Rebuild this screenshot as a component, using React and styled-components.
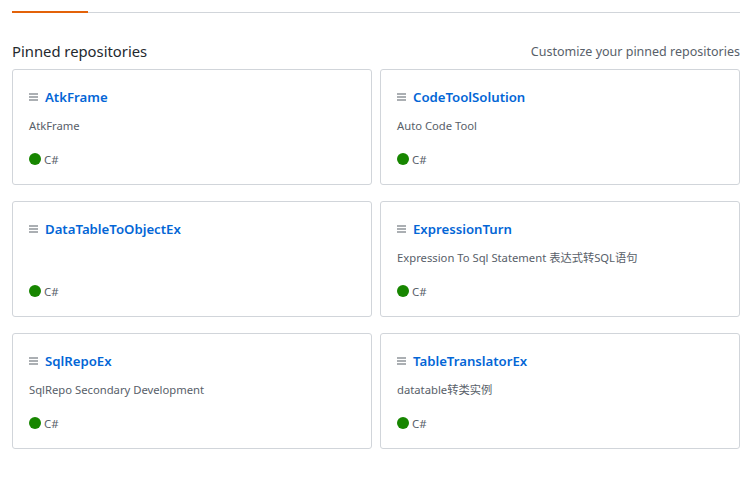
import React from "react";
import styled, { createGlobalStyle } from "styled-components";

const Global = createGlobalStyle`
  html, body { margin: 0; padding: 0; background: #fff; }
  body { font-family: "Noto Sans", "Noto Sans CJK SC", sans-serif; color: #24292e; }
`;

const Page = styled.div`
  padding: 0 8px 0 12px;
`;

const TabBar = styled.div`
  display: flex;
  height: 12px;
  border-bottom: 1px solid #d1d5da;
`;

const ActiveTab = styled.div`
  width: 76px;
  height: 13px;
  margin-bottom: -1px;
  border-bottom: 2px solid #e36209;
  box-sizing: border-box;
`;

const Header = styled.div`
  display: flex;
  justify-content: space-between;
  align-items: center;
  margin-top: 26px;
  height: 24px;
  margin-bottom: 6px;
`;

const Title = styled.h2`
  margin: 0;
  font-size: 14.8px;
  font-weight: 400;
  color: #24292e;
`;

const Customize = styled.a`
  font-size: 12.5px;
  color: #586069;
  text-decoration: none;
`;

const Grid = styled.div`
  display: grid;
  grid-template-columns: 1fr 1fr;
  column-gap: 8px;
  row-gap: 16px;
`;

const Card = styled.div`
  box-sizing: border-box;
  height: 116px;
  border: 1px solid #d1d5da;
  border-radius: 3px;
  padding: 15px 16px 0 16px;
  display: flex;
  flex-direction: column;
`;

const NameRow = styled.div`
  display: flex;
  align-items: center;
  height: 24px;
`;

const RepoLink = styled.a`
  font-size: 13.2px;
  font-weight: 600;
  color: #0366d6;
  text-decoration: none;
  margin-left: 7px;
`;

const Desc = styled.p`
  margin: 8px 0 0;
  height: 18px;
  line-height: 18px;
  font-size: 11.25px;
  color: #586069;
`;

const Meta = styled.div`
  margin-top: 16px;
  display: flex;
  align-items: center;
  height: 16px;
  font-size: 11.5px;
  color: #586069;
`;

const Dot = styled.span`
  width: 12px;
  height: 12px;
  border-radius: 50%;
  background: ${(p) => p.color};
  margin-right: 3px;
`;

const ListIcon = () => (
  <svg width="9" height="8" viewBox="0 0 9 8" fill="#586069">
    <rect x="0" y="0.5" width="9" height="1" />
    <rect x="0" y="3.5" width="9" height="1" />
    <rect x="0" y="6.5" width="9" height="1" />
  </svg>
);

const repos = [
  { name: "AtkFrame", desc: "AtkFrame" },
  { name: "CodeToolSolution", desc: "Auto Code Tool" },
  { name: "DataTableToObjectEx", desc: "" },
  { name: "ExpressionTurn", desc: "Expression To Sql Statement 表达式转SQL语句" },
  { name: "SqlRepoEx", desc: "SqlRepo Secondary Development" },
  { name: "TableTranslatorEx", desc: "datatable转类实例" },
];

export default function App() {
  return (
    <Page>
      <Global />
      <TabBar>
        <ActiveTab />
      </TabBar>
      <Header>
        <Title>Pinned repositories</Title>
        <Customize href="#">Customize your pinned repositories</Customize>
      </Header>
      <Grid>
        {repos.map((r) => (
          <Card key={r.name}>
            <NameRow>
              <ListIcon />
              <RepoLink href="#">{r.name}</RepoLink>
            </NameRow>
            <Desc>{r.desc}</Desc>
            <Meta>
              <Dot color="#178600" />
              C#
            </Meta>
          </Card>
        ))}
      </Grid>
    </Page>
  );
}
